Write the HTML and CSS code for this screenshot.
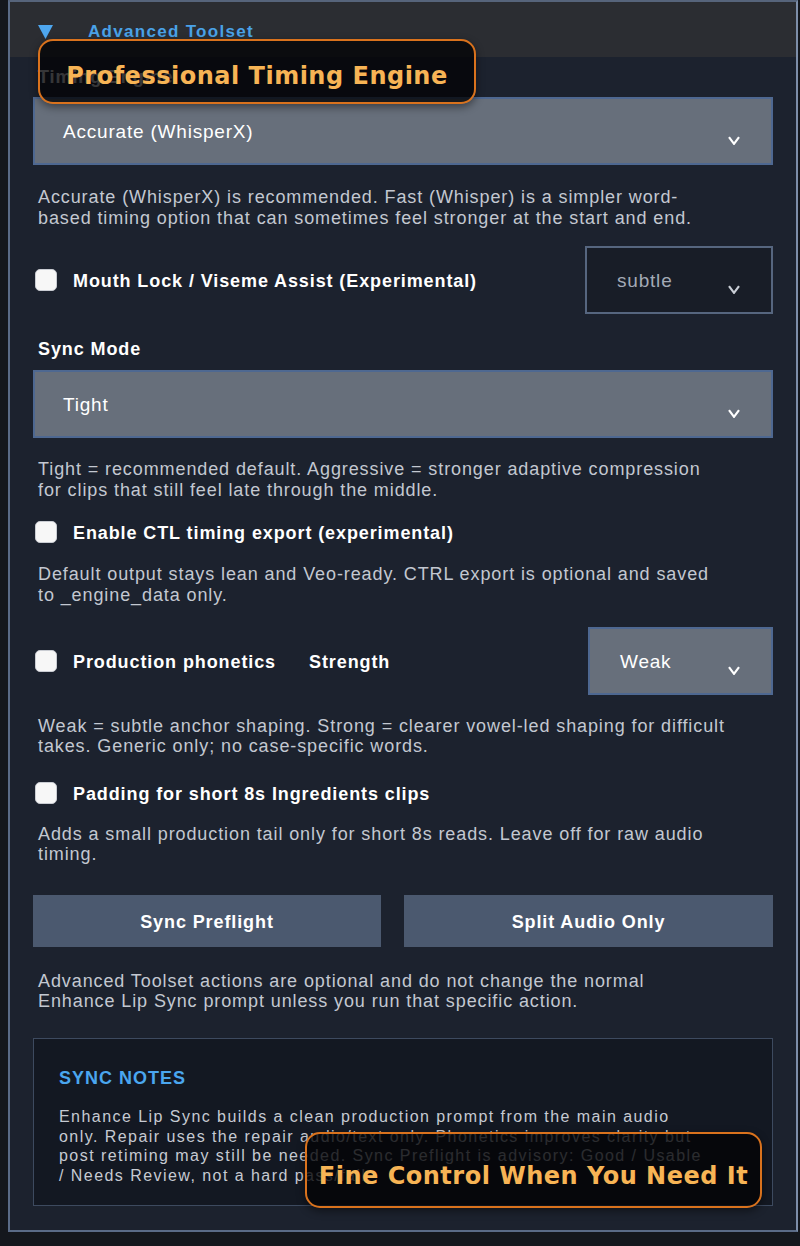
FILE: index.html
```html
<!DOCTYPE html>
<html lang="en">
<head>
<meta charset="utf-8">
<title>Advanced Toolset</title>
<link rel="stylesheet" href="styles.css">
</head>
<body>
<div class="panel">
  <div class="panel-head">
    <svg class="tri" width="15" height="14" viewBox="0 0 15 14"><polygon points="0,0 15,0 7.5,14" fill="#4ea6ee"/></svg>
    <span class="panel-title">Advanced Toolset</span>
  </div>
  <div class="panel-body">
    <div class="field-label first">Timing Engine</div>
    <div class="select light s1">
      <span class="select-text">Accurate (WhisperX)</span>
      <svg class="chev" width="12" height="9" viewBox="0 0 12 9"><polyline points="1,1.2 6,7.8 11,1.2" fill="none" stroke="#fff" stroke-width="2.2"/></svg>
    </div>
    <p class="help h1">Accurate (WhisperX) is recommended. Fast (Whisper) is a simpler word-<br>based timing option that can sometimes feel stronger at the start and end.</p>

    <div class="row r-mouth">
      <span class="check"></span>
      <span class="check-label">Mouth Lock / Viseme Assist (Experimental)</span>
      <div class="select dark small">
        <span class="select-text">subtle</span>
        <svg class="chev" width="12" height="9" viewBox="0 0 12 9"><polyline points="1,1.2 6,7.8 11,1.2" fill="none" stroke="#c9ced6" stroke-width="2.2"/></svg>
      </div>
    </div>

    <div class="field-label l2">Sync Mode</div>
    <div class="select light s2">
      <span class="select-text">Tight</span>
      <svg class="chev" width="12" height="9" viewBox="0 0 12 9"><polyline points="1,1.2 6,7.8 11,1.2" fill="none" stroke="#fff" stroke-width="2.2"/></svg>
    </div>
    <p class="help h2">Tight = recommended default. Aggressive = stronger adaptive compression<br>for clips that still feel late through the middle.</p>

    <div class="row line r-ctl">
      <span class="check"></span>
      <span class="check-label">Enable CTL timing export (experimental)</span>
    </div>
    <p class="help h3">Default output stays lean and Veo-ready. CTRL export is optional and saved<br>to _engine_data only.</p>

    <div class="row r-phon">
      <span class="check"></span>
      <span class="check-label">Production phonetics</span>
      <span class="check-label strength">Strength</span>
      <div class="select light small weak">
        <span class="select-text">Weak</span>
        <svg class="chev" width="12" height="9" viewBox="0 0 12 9"><polyline points="1,1.2 6,7.8 11,1.2" fill="none" stroke="#fff" stroke-width="2.2"/></svg>
      </div>
    </div>
    <p class="help h4">Weak = subtle anchor shaping. Strong = clearer vowel-led shaping for difficult<br>takes. Generic only; no case-specific words.</p>

    <div class="row line r-pad">
      <span class="check"></span>
      <span class="check-label">Padding for short 8s Ingredients clips</span>
    </div>
    <p class="help h5">Adds a small production tail only for short 8s reads. Leave off for raw audio<br>timing.</p>

    <div class="buttons">
      <button class="btn">Sync Preflight</button>
      <button class="btn">Split Audio Only</button>
    </div>
    <p class="help h6">Advanced Toolset actions are optional and do not change the normal<br>Enhance Lip Sync prompt unless you run that specific action.</p>

    <div class="notes">
      <div class="notes-title">SYNC NOTES</div>
      <p class="notes-text">Enhance Lip Sync builds a clean production prompt from the main audio<br>only. Repair uses the repair audio/text only. Phonetics improves clarity but<br>post retiming may still be needed. Sync Preflight is advisory: Good / Usable<br>/ Needs Review, not a hard pass/fail.</p>
    </div>
  </div>
</div>

<div class="badge badge-top">Professional Timing Engine</div>
<div class="badge badge-bottom">Fine Control When You Need It</div>
</body>
</html>
```
FILE: styles.css
```css
* { box-sizing: border-box; }

html, body {
  margin: 0;
  padding: 0;
}

body {
  background: #14171d;
  font-family: "Liberation Sans", Arial, sans-serif;
  color: #fff;
  width: 800px;
  height: 1246px;
  position: relative;
  overflow: hidden;
}

.panel {
  margin-left: 8px;
  width: 790px;
  border: 2px solid #5a6b87;
  border-top-color: #56647b;
  border-right-color: #7d8ea9;
  background: #1c222e;
}

.panel-head {
  height: 55px;
  background: #2b2d32;
  display: flex;
  align-items: center;
  padding-left: 28px;
}

.tri {
  display: block;
  margin-top: 4px;
}

.panel-title {
  margin-left: 35px;
  font-weight: bold;
  font-size: 17px;
  letter-spacing: 1.3px;
  color: #4aa2e8;
  line-height: 22px;
  margin-top: 5px;
}

.panel-body {
  padding: 0 23px 24px 23px;
}

.field-label {
  font-weight: bold;
  font-size: 18px;
  letter-spacing: 0.9px;
  line-height: 24px;
  padding-left: 5px;
  padding-top: 1px;
  height: 24px;
  color: #fff;
}
.field-label.first { margin-top: 7px; }
.field-label.l2 { margin-top: 22px; }

.select {
  height: 68px;
  border: 2px solid #4e6891;
  display: flex;
  align-items: center;
  justify-content: space-between;
  padding: 2px 31px 0 28px;
}
.select.light { background: #676f7b; }
.select.dark {
  background: #181d27;
  border-color: #56667f;
}
.select .chev {
  align-self: flex-end;
  margin-bottom: 18px;
}

.select-text {
  font-size: 19px;
  letter-spacing: 0.8px;
  color: #fff;
}
.select.dark .select-text { color: #a3aab6; }

.s1 { margin-top: 9px; }
.s2 { margin-top: 10px; }

.select.small {
  margin-left: auto;
  width: 188px;
  padding-left: 30px;
}
.select.weak { width: 185px; }

.help {
  margin: 0;
  padding-left: 5px;
  padding-top: 1.5px;
  font-size: 18px;
  letter-spacing: 0.9px;
  line-height: 20.7px;
  color: #c3c8d1;
}
.h1 { margin-top: 20.5px; }
.h2 { margin-top: 19.5px; }
.h3 { margin-top: 18.5px; }
.h4 { margin-top: 19.5px; }
.h5 { margin-top: 17.5px; }
.h6 { margin-top: 22.5px; }

.row {
  display: flex;
  align-items: center;
}
.row.line { height: 24px; }
.r-mouth { margin-top: 17.5px; }
.r-ctl { margin-top: 19.5px; }
.r-phon { margin-top: 21.5px; }
.r-pad { margin-top: 23.5px; }

.check {
  width: 22px;
  height: 22px;
  border-radius: 5px;
  background: #f7f7f7;
  border: 1px solid #c9ccd2;
  margin-left: 2px;
  flex: none;
}

.check-label {
  margin-left: 16px;
  font-weight: bold;
  font-size: 18px;
  letter-spacing: 0.9px;
  color: #fff;
  line-height: 24px;
  padding-top: 2px;
}
.check-label.strength { margin-left: 33px; }

.buttons {
  margin-top: 29.5px;
  display: grid;
  grid-template-columns: 348fr 369fr;
  column-gap: 23px;
}

.btn {
  height: 52px;
  border: none;
  background: #4b596f;
  color: #fff;
  font-family: "Liberation Sans", Arial, sans-serif;
  font-weight: bold;
  font-size: 18px;
  letter-spacing: 0.9px;
  padding: 3px 0 0 0;
}

.notes {
  margin-top: 26.5px;
  height: 168px;
  border: 1.5px solid #3d4a5f;
  background: #131822;
  padding: 28px 20px 0 25px;
}

.notes-title {
  font-weight: bold;
  font-size: 18px;
  letter-spacing: 1px;
  color: #4aa6ef;
  line-height: 22px;
}

.notes-text {
  margin: 18px 0 0 0;
  font-size: 16px;
  letter-spacing: 1.45px;
  line-height: 19.5px;
  color: #c6cad2;
}

.badge {
  position: absolute;
  background: rgba(4, 4, 6, 0.8);
  border: 2px solid #d9721d;
  border-radius: 15px;
  color: #f7b455;
  font-family: "DejaVu Sans", Verdana, sans-serif;
  font-weight: bold;
  font-size: 24px;
  letter-spacing: 0.5px;
  display: flex;
  align-items: center;
  justify-content: center;
  box-shadow: 0 3px 8px rgba(0, 0, 0, 0.45);
  white-space: nowrap;
}

.badge-top {
  left: 38px;
  top: 39px;
  width: 438px;
  height: 65px;
  padding-top: 8px;
}

.badge-bottom {
  left: 305px;
  top: 1132px;
  width: 457px;
  height: 76px;
  padding-top: 12px;
}
```
